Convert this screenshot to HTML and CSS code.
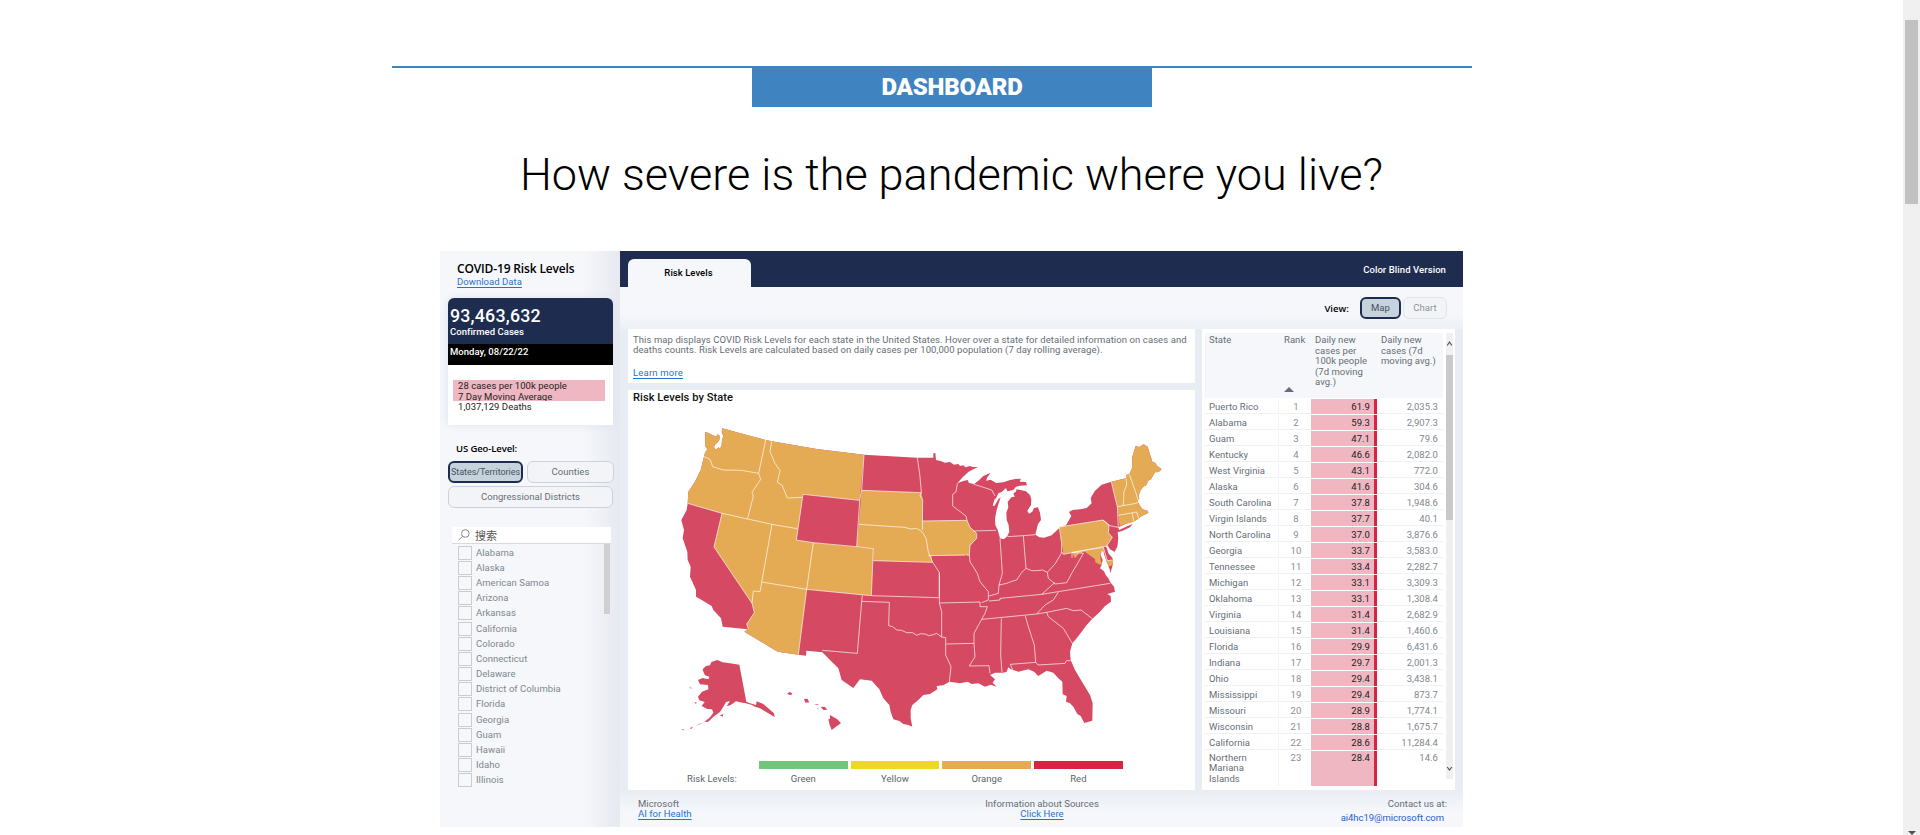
FILE: index.html
```html
<!DOCTYPE html>
<html lang="en">
<head>
<meta charset="utf-8">
<title>COVID-19 Risk Levels</title>
<link rel="stylesheet" href="styles.css">
</head>
<body>
<main class="page">
  <div class="rule"></div>
  <div class="banner">DASHBOARD</div>
  <h1 class="headline">How severe is the pandemic where you live?</h1>

  <section class="dash">
    <aside class="side">
      <h2 class="side-title">COVID-19 Risk Levels</h2>
      <a class="link download">Download Data</a>
      <div class="card">
        <div class="card-top"><div class="total">93,463,632</div><div class="total-label">Confirmed Cases</div></div>
        <div class="card-date">Monday, 08/22/22</div>
        <div class="card-body">
          <div class="hot"><div>28 cases per 100k people</div><div>7 Day Moving Average</div></div>
          <div class="deaths">1,037,129 Deaths</div>
        </div>
      </div>
      <div class="geo-label">US Geo-Level:</div>
      <div class="geo">
        <div class="btn on">States/Territories</div><div class="btn">Counties</div>
        <div class="btn wide">Congressional Districts</div>
      </div>
      <div class="search">
        <svg class="lens" viewBox="0 0 12 12"><circle cx="7.3" cy="4.5" r="3.8"/><path d="M4.6 7.2L.6 11.2"/></svg>
        <span>搜索</span>
      </div>
      <div class="list-wrap">
        <ul class="list">
          <li>Alabama</li><li>Alaska</li><li>American Samoa</li><li>Arizona</li><li>Arkansas</li><li>California</li><li>Colorado</li><li>Connecticut</li><li>Delaware</li><li>District of Columbia</li><li>Florida</li><li>Georgia</li><li>Guam</li><li>Hawaii</li><li>Idaho</li><li>Illinois</li>
        </ul>
        <div class="list-thumb"></div>
      </div>
    </aside>

    <div class="main">
      <header class="top"><div class="tab">Risk Levels</div><div class="cbv">Color Blind Version</div></header>
      <div class="view"><span class="view-label">View:</span><div class="btn on">Map</div><div class="btn dim">Chart</div></div>
      <div class="cols">
        <div class="left">
          <div class="desc">
            <p class="l1">This map displays COVID Risk Levels for each state in the United States. Hover over a state for detailed information on cases and</p>
            <p class="l2">deaths counts. Risk Levels are calculated based on daily cases per 100,000 population (7 day rolling average).</p>
            <a class="link">Learn more</a>
          </div>
          <div class="mapbox">
            <h3 class="map-title">Risk Levels by State</h3>
            <svg class="map" viewBox="-30 0 1590 1010">
              <!-- contiguous states -->
              <path class="red" d="M106 65L121 72 138 80 143 73 149 78 148 90 143 97 134 105 132 112 138 119 146 112 150 116 155 105 156 90 160 78 155 67 157 55 222 73 287 90 305 94 440 117 582 134 742 143 790 143 790 130 796 129 798 150 812 153 825 158 840 156 852 164 865 162 870 168 880 166 886 172 900 168 908 171 924 171 910 178 895 186 878 202 862 220 880 213 893 210 897 219 912 222 925 212 940 198 962 188 952 202 948 212 962 209 978 219 1000 217 1018 211 1035 207 1053 206 1049 215 1068 216 1071 226 1050 227 1038 230 1030 240 1012 244 1008 234 995 246 985 250 980 262 973 270 968 287 974 287 985 268 992 262 986 280 980 300 975 325 976 345 983 360 990 385 1002 388 1012 378 1018 365 1016 345 1010 330 1009 308 1015 292 1013 276 1024 262 1034 260 1030 250 1037 246 1040 238 1055 241 1068 244 1080 255 1084 268 1083 285 1072 302 1077 311 1087 305 1092 294 1104 292 1110 308 1113 330 1104 342 1096 374 1108 382 1122 383 1145 376 1168 354 1188 346 1204 318 1197 306 1208 300 1230 298 1250 294 1265 280 1262 264 1275 242 1295 224 1324 215 1368 205 1368 195 1378 193 1386 175 1387 140 1397 108 1408 111 1421 103 1433 110 1447 155 1455 158 1462 168 1475 178 1466 186 1455 187 1450 196 1443 208 1434 212 1430 224 1420 230 1412 240 1406 256 1408 266 1402 272 1410 288 1418 298 1432 302 1435 308 1420 316 1412 320 1405 326 1390 335 1368 341 1345 352 1347 360 1368 350 1388 342 1380 352 1358 362 1343 367 1345 385 1342 410 1332 428 1325 424 1311 415 1315 430 1328 445 1328 465 1324 480 1320 490 1315 470 1312 460 1305 440 1298 420 1291 432 1298 450 1295 465 1290 475 1302 482 1307 495 1315 505 1322 518 1332 530 1335 545 1325 548 1312 552 1322 558 1323 575 1305 588 1290 605 1267 626 1250 645 1235 665 1220 685 1207 700 1200 725 1202 750 1215 780 1240 822 1260 855 1268 880 1267 932 1243 939 1232 918 1222 912 1210 890 1200 880 1188 875 1190 858 1178 853 1177 815 1165 805 1150 788 1130 782 1105 798 1092 785 1075 778 1045 785 1022 778 1015 772 1010 785 1000 788 975 788 960 795 975 808 968 818 980 830 962 824 945 830 925 820 905 822 893 815 870 820 838 815 820 826 800 828 802 838 780 852 760 855 745 870 727 885 722 900 722 925 727 950 715 945 700 942 688 933 670 928 662 905 658 885 640 865 628 838 605 812 570 808 550 834 515 810 505 775 480 750 457 727 409 722 408 737 385 734 323 725 223 665 233 658 158 650 153 625 130 600 125 588 95 570 78 560 78 540 60 500 62 470 53 450 52 425 38 385 42 360 34 330 50 300 53 280 55 245 75 215 92 180 102 140 105 128 112 118 105 108Z"/>
              <!-- orange states -->
              <g class="orange">
                <path d="M106 65L121 72 138 80 143 73 149 78 148 90 143 97 134 105 132 112 138 119 146 112 150 116 155 105 156 90 160 78 155 67 157 55 222 73 287 90 305 94 440 117 582 134 569 271 399 253 379 390 430 398 610 416 604 557 410 538 385 734 323 725 223 665 235 655 230 642 253 608 246 580 132 411 156 310 53 280 55 245 75 215 92 180 102 140 105 128 112 118 105 108Z"/>
                <path d="M575 241L754 248 758 265 758 333 891 331 900 352 918 368 920 385 900 408 898 436 784 437 788 457 610 452 610 416 560 410Z"/>
                <path d="M1168 351L1299 330 1317 346 1315 368 1327 382 1310 408 1180 433Z"/>
                <path d="M1206 427L1300 412 1311 452 1330 450 1326 465 1316 470 1308 452 1304 422 1291 430 1292 450 1297 466 1286 462 1276 457 1275 447 1258 435 1245 425 1228 430 1215 445Z"/>
                <path d="M1324 215L1368 205 1368 195 1378 193 1386 175 1387 140 1397 108 1408 111 1421 103 1433 110 1447 155 1455 158 1462 168 1475 178 1466 186 1455 187 1450 196 1443 208 1434 212 1430 224 1420 230 1412 240 1406 256 1408 266 1402 272 1410 288 1418 298 1432 302 1436 308 1420 316 1412 320 1405 326 1390 335 1368 341 1349 348 1342 290Z"/>
              </g>
              <!-- Delaware and Chesapeake bays -->
              <path class="water" d="M1310 408L1318 420 1332 428M1297 424L1299 440 1306 458 1316 478 1318 500M1304 462L1296 474 1312 490"/>
              <!-- state boundaries -->
              <g class="lines">
                <path d="M102 140L120 148 128 170 160 180 215 181 266 190 287 90M305 94L300 125 315 160 330 182 322 217 336 225 352 264 396 262M266 190L272 208 246 247 250 258 233 326M53 280L156 310 306 343 381 356 M399 253L379 390 430 398 560 410 610 416 604 557M399 253L569 271M582 134L575 241 569 271 560 410M156 310L132 411 246 580 250 543 270 545 306 343M246 580L253 608 230 642 235 657M275 516L410 538 430 398M385 734L410 538 604 557 806 563M575 241L754 248 M742 143L750 200 754 248 750 257 758 270 757 360 M567 343L705 352 722 357 740 355 757 366 768 385 775 425 788 457 808 487 808 563M610 452L788 457M758 333L891 331M775 437L885 435M577 556L575 574 658 577 656 647 668 650 680 660 695 661 710 668 728 668 740 676 752 671 765 672 776 677 790 674 800 670 815 681M575 574L562 730 457 721"/>
                <path d="M862 220L858 245 848 253 848 288 888 318 891 331 900 352 920 370 920 385 900 406 898 436 888 434M898 436L900 455 922 490 930 515 955 545 955 570 935 578M910 222L965 240 975 258M911 363L978 361M990 385L997 490 987 525 985 550 957 558M1060 377L1012 380M1060 377L1068 475 1053 490 1040 510 1025 514 1010 520 987 525M1060 377L1096 374M1068 475L1085 482 1100 482 1118 480 1132 487M1168 354L1175 400 1174 430 1155 462 1132 487M1168 351L1299 330 1317 346 1315 368 1327 382 1310 408 1180 433 1175 425M1299 330L1320 347 1345 352M1132 487L1135 505 1155 522 1190 518 1205 490 1220 465 1240 430 1206 427 1206 443M1155 517L1115 553M957 573L990 570 990 565 1115 553 1320 520M1165 547L1150 570 1125 585 1100 612M935 628L1100 612 1130 607 1190 595 1210 602 1233 600 1267 626M1130 607L1135 620 1180 655 1207 700M808 579L930 576 930 590 952 590 945 610 935 628 912 670 912 700 915 740 898 768 957 767 960 790M808 487L808 579 815 605 815 681 827 683 827 735 843 770 838 815M829 702L912 700M994 625L992 735 996 787M1066 618L1075 650 1093 705 1097 757 1021 763 1028 780M1097 757L1104 765 1185 760 1190 752 1202 752M1324 215L1332 250 1342 290 1345 352M1342 290L1398 280 1408 274M1345 316L1400 306 1406 325M1387 309L1391 334M1368 205L1370 225 1362 245 1360 287M1378 193L1400 255 1404 270M1206 427L1300 412 1312 452 1328 450"/>
              </g>
              <!-- Alaska and Hawaii -->
              <path class="red" d="M98 778L108 768 120 766 124 756 142 750 158 757 180 760 208 764 229 875 240 880 258 885 260 874 280 882 312 910 314 921 295 910 270 895 255 890 244 884 227 880 210 877 198 874 182 885 170 889 180 873 168 876 160 890 150 906 130 920 115 935 103 936 120 922 130 908 126 898 112 897 95 888 104 876 88 871 84 860 96 845 115 838 114 825 90 823 84 810 98 804 115 808 118 800 105 796 100 785ZM150 916L160 912 158 920ZM77 948L88 941 98 938ZM58 955L69 950 65 956ZM32 959L43 958 41 961ZM56 829L68 836 62 835ZM73 877L80 877 78 882ZM351 852L358 846 366 849 364 856ZM402 867L412 866 418 877 406 878ZM433 882L448 884 440 886ZM452 890L465 891 472 899 460 900ZM441 895L447 897 442 898ZM480 915L502 928 513 940 498 950 485 960 479 945 475 928 480 926Z"/>
            </svg>
            <div class="legend">
              <span class="legend-name">Risk Levels:</span>
              <span class="key green">Green</span><span class="key yellow">Yellow</span><span class="key amber">Orange</span><span class="key crimson">Red</span>
            </div>
          </div>
        </div>

        <div class="tablebox">
          <div class="grid">
            <div class="row head"><span>State</span><span class="rank">Rank<svg class="sort" viewBox="0 0 10 5"><path d="M0 5L5 0 10 5Z"/></svg></span><span>Daily new<br>cases per<br>100k people<br>(7d moving<br>avg.)</span><span>Daily new<br>cases (7d<br>moving avg.)</span></div>
            <div class="row"><span>Puerto Rico</span><span>1</span><span>61.9</span><span>2,035.3</span></div>
            <div class="row"><span>Alabama</span><span>2</span><span>59.3</span><span>2,907.3</span></div>
            <div class="row"><span>Guam</span><span>3</span><span>47.1</span><span>79.6</span></div>
            <div class="row"><span>Kentucky</span><span>4</span><span>46.6</span><span>2,082.0</span></div>
            <div class="row"><span>West Virginia</span><span>5</span><span>43.1</span><span>772.0</span></div>
            <div class="row"><span>Alaska</span><span>6</span><span>41.6</span><span>304.6</span></div>
            <div class="row"><span>South Carolina</span><span>7</span><span>37.8</span><span>1,948.6</span></div>
            <div class="row"><span>Virgin Islands</span><span>8</span><span>37.7</span><span>40.1</span></div>
            <div class="row"><span>North Carolina</span><span>9</span><span>37.0</span><span>3,876.6</span></div>
            <div class="row"><span>Georgia</span><span>10</span><span>33.7</span><span>3,583.0</span></div>
            <div class="row"><span>Tennessee</span><span>11</span><span>33.4</span><span>2,282.7</span></div>
            <div class="row"><span>Michigan</span><span>12</span><span>33.1</span><span>3,309.3</span></div>
            <div class="row"><span>Oklahoma</span><span>13</span><span>33.1</span><span>1,308.4</span></div>
            <div class="row"><span>Virginia</span><span>14</span><span>31.4</span><span>2,682.9</span></div>
            <div class="row"><span>Louisiana</span><span>15</span><span>31.4</span><span>1,460.6</span></div>
            <div class="row"><span>Florida</span><span>16</span><span>29.9</span><span>6,431.6</span></div>
            <div class="row"><span>Indiana</span><span>17</span><span>29.7</span><span>2,001.3</span></div>
            <div class="row"><span>Ohio</span><span>18</span><span>29.4</span><span>3,438.1</span></div>
            <div class="row"><span>Mississippi</span><span>19</span><span>29.4</span><span>873.7</span></div>
            <div class="row"><span>Missouri</span><span>20</span><span>28.9</span><span>1,774.1</span></div>
            <div class="row"><span>Wisconsin</span><span>21</span><span>28.8</span><span>1,675.7</span></div>
            <div class="row"><span>California</span><span>22</span><span>28.6</span><span>11,284.4</span></div>
            <div class="row tall"><span>Northern<br>Mariana<br>Islands</span><span>23</span><span>28.4</span><span>14.6</span></div>
          </div>
          <div class="bar">
            <svg viewBox="0 0 7 22"><path d="M1.2 12.5L3.5 9l2.3 3.5"/></svg>
            <div class="bar-thumb"></div>
            <svg viewBox="0 0 7 22"><path d="M1.2 10L3.5 13l2.3-3"/></svg>
          </div>
        </div>
      </div>
      <footer class="foot">
        <div class="f1">Microsoft<br><a class="link">AI for Health</a></div>
        <div class="f2">Information about Sources<br><a class="link">Click Here</a></div>
        <div class="f3">Contact us at:<br><a class="mail">ai4hc19@microsoft.com</a></div>
      </footer>
    </div>
  </section>
</main>
<div class="scroll"><div class="scroll-thumb"></div><svg class="scroll-arrow" viewBox="0 0 8 4"><path d="M0 0h8L4 4z"/></svg></div>
</body>
</html>
```
FILE: styles.css
```css
* { box-sizing: border-box; }
body { margin: 0; height: 835px; overflow: hidden; display: flex; background: #fff; font-family: Roboto, "Liberation Sans", sans-serif; }
h1, h2, h3, p, ul { margin: 0; padding: 0; font-weight: inherit; }
.page { width: 1903px; height: 835px; padding-top: 66px; }
.rule { width: 1080px; height: 2px; margin-left: 392px; background: #3f84c0; }
.banner { width: 400px; height: 39px; margin-left: 752px; background: #3f84c0; color: #fff; font-size: 24px; font-weight: 900; letter-spacing: -.2px; line-height: 38px; text-align: center; }
.headline { width: 1000px; height: 144px; margin-left: 451.5px; padding-top: 40px; font-size: 45px; font-weight: 300; line-height: 56px; text-align: center; color: #000; white-space: nowrap; }

.dash { display: flex; width: 1023px; height: 576px; margin-left: 440px; background: #f5f7fb; font-size: 9.5px; line-height: 10px; letter-spacing: .04px; color: #666e75; white-space: nowrap; }
.link { color: #1f74d1; text-decoration: underline; text-underline-offset: 2px; }

.side { width: 180px; height: 576px; padding-left: 8px; background: linear-gradient(90deg, #f5f7fb 0 80%, #e6e9f0); }
.side-title { padding: 10px 0 0 9px; color: #000; font: 600 12px/16px "Open Sans", sans-serif; letter-spacing: -.15px; }
.download { display: block; margin: 0 0 11px 9px; }
.card { width: 165px; height: 127px; border-radius: 6px 6px 0 0; overflow: hidden; background: #fff; box-shadow: 0 0 8px #dde2ec; color: #fff; }
.card-top { height: 46px; padding: 8px 0 0 2px; background: #1e2d4f; }
.total { font-size: 17.8px; font-weight: 500; line-height: 20px; letter-spacing: .2px; }
.total-label { font-weight: 500; line-height: 11px; }
.card-date { height: 21px; padding-left: 2px; background: #000; font-weight: 500; line-height: 16px; }
.card-body { padding: 15px 8px 0 5px; color: #252423; }
.hot { height: 21px; padding-left: 5px; background: #eeb7c1; line-height: 11px; overflow: hidden; }
.deaths { padding-left: 5px; line-height: 11px; }
.geo-label { margin: 18px 0 6px 8px; color: #000; font: 600 9.5px/12px "Open Sans", sans-serif; letter-spacing: -.1px; }
.geo { display: flex; flex-wrap: wrap; gap: 3px 4px; width: 167px; }
.btn { width: 87px; height: 22px; border: 1.5px solid #ccd1dc; border-radius: 6px; background: #f3f4f7; line-height: 19px; text-align: center; }
.geo .on { width: 75px; font-size: 9px; letter-spacing: -.05px; }
.btn.on { border: 2px solid #1e2d4f; line-height: 18px; background: #c6d2dc; color: #465260; }
.btn.wide { width: 165px; }
.search { display: flex; align-items: center; gap: 5px; width: 159px; height: 17px; margin: 19px 0 0 4px; padding-left: 6px; background: #fff; border-bottom: 1px solid #d9d9d9; color: #555; font: 11px/14px "Noto Sans CJK SC", sans-serif; }
.lens { width: 12px; height: 12px; fill: none; stroke: #888; stroke-width: 1; }
.list-wrap { display: flex; justify-content: space-between; width: 158px; margin-left: 4px; }
.list { list-style: none; padding: 1px 0 0 6px; }
.list li { display: flex; align-items: center; gap: 5px; height: 15.2px; color: #80878d; }
.list li::before { content: ""; width: 12px; height: 12px; border: 1px solid #ccc; margin-right: -1px; }
.list-thumb { width: 6px; height: 70px; background: #cfcfcf; }

.main { width: 843px; height: 576px; background: #f5f7fb; }
.top { display: flex; justify-content: space-between; height: 36px; padding: 8px 17px 0 8px; background: #1e2d4f; }
.tab { width: 123px; height: 28px; padding-right: 2px; border-radius: 6px 6px 0 0; background: #f5f7fb; color: #000; font-weight: 500; line-height: 28px; text-align: center; }
.cbv { color: #fff; font-weight: 500; line-height: 22px; letter-spacing: .08px; }
.view { display: flex; justify-content: flex-end; gap: 2px; height: 42px; padding: 10px 16px 0 0; background: linear-gradient(#f5f7fb 60%, #edf0f5); }
.view-label { margin-right: 9px; color: #000; font: 600 9.5px/24px "Open Sans", sans-serif; }
.view .on { width: 41px; }
.view .dim { width: 44px; border-color: #e2e4ea; color: #8d949b; }
.cols { display: flex; gap: 7px; height: 461px; padding-left: 8px; background: #e8ecf3; }
.left { display: flex; flex-direction: column; gap: 7px; width: 567px; }
.desc { height: 54px; padding: 6px 5px 0; background: #fff; }
.l1 { letter-spacing: .085px; }
.l2 { letter-spacing: .07px; }
.desc .link { display: inline-block; margin-top: 13px; letter-spacing: .2px; }
.mapbox { height: 400px; background: #fff; }
.map-title { padding: 2px 0 0 5px; color: #111; font-weight: 500; line-height: 12px; }
.map { display: block; width: 530px; height: 336.7px; margin: 6px 0 0 32px; }
.red { fill: #d54a62; }
.orange { fill: #e5aa54; }
.lines { fill: none; stroke: #fff; stroke-width: 2.5; stroke-opacity: .8; stroke-linejoin: round; }
.water { fill: none; stroke: #fff; stroke-width: 6; }
.legend { display: flex; gap: 3px; margin: 14px 0 0 59px; color: #5d6469; text-align: center; }
.legend-name { width: 69px; padding-top: 13px; text-align: left; }
.key { width: 88.7px; padding-top: 5px; border-top: 8px solid; }
.key.green { border-color: #70c77a; }
.key.yellow { border-color: #efd728; }
.key.amber { border-color: #e5aa54; }
.key.crimson { border-color: #d52542; }
.green, .yellow, .amber, .crimson { color: #5d6469; }

.tablebox { display: flex; gap: 3px; width: 253px; padding: 4px 2px 4px 3px; background: #fff; }
.grid { width: 238px; }
.row { display: grid; grid-template-columns: 74px 30px 68px 65px; height: 14px; margin-bottom: 2px; line-height: 15px; background: #fff; box-shadow: 0 1px 0 #eff1f5; }
.row span:nth-child(1) { padding-left: 4px; border-right: 1px solid #f1f3f8; }
.row span:nth-child(2) { padding-left: 4px; text-align: center; color: #878e94; }
.row span:nth-child(3) { margin-left: 2px; padding-right: 4px; border-right: 3px solid #d52542; background: #eeb7c1; color: #222; text-align: right; }
.row span:nth-child(4) { padding-right: 4px; color: #80878d; text-align: right; }
.row.head { height: 65px; margin-bottom: 1px; padding-top: 2px; background: #f5f7fb; line-height: 10.5px; box-shadow: none; }
.head span:nth-child(n) { padding: 0 0 0 4px; border: 0; margin: 0; background: none; color: #666e75; text-align: left; }
.head span:nth-child(3) { padding-left: 6px; }
.head .rank { display: flex; flex-direction: column; justify-content: space-between; }
.head .rank:nth-child(n) { padding: 0 0 6px 5px; }
.sort { width: 10px; height: 5px; fill: #666e75; }
.row.tall { height: 35px; line-height: 10.5px; margin: 0; box-shadow: none; }
.row.tall span { padding-top: 2px; }
.bar { display: flex; flex-direction: column; width: 7px; height: 446px; background: #f0f0f0; }
.row:not(.head) { position: relative; top: -.5px; }
.bar svg { width: 7px; height: 22px; fill: none; stroke: #555; stroke-width: 1.2; }
.bar-thumb { height: 165px; margin-bottom: 237px; background: #c9c9c9; }

.foot { display: flex; height: 37px; padding: 9px 16px 0 18px; background: linear-gradient(#e9edf3, #f5f7fb 60%); }
.f1 { width: 302px; }
.f2 { width: 204px; text-align: center; }
.f3 { flex: 1; text-align: right; }
.mail { display: inline-block; margin: 4px 3px 0 0; letter-spacing: -.05px; color: #1f5fd1; }

.scroll { display: flex; flex-direction: column; justify-content: space-between; align-items: center; width: 17px; height: 835px; padding: 20px 2px 0; background: #f0f0f0; }
.scroll-thumb { width: 13px; height: 184px; background: #c1c1c1; }
.scroll-arrow { width: 8px; height: 4px; fill: #505050; }
```
